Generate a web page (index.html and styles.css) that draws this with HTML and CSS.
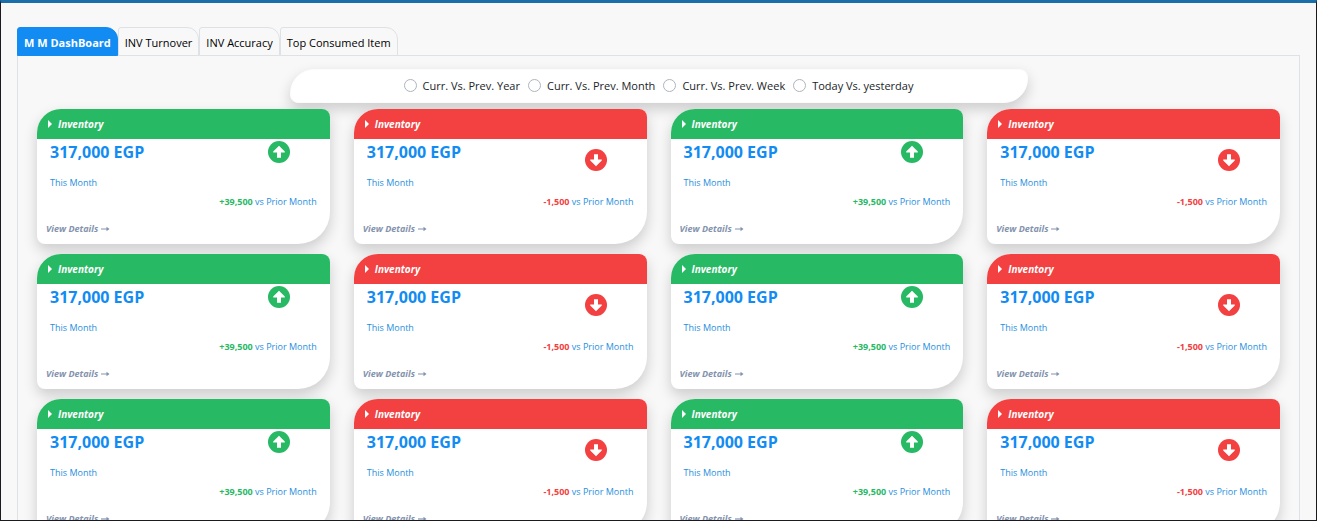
FILE: index.html
```html
<!DOCTYPE html>
<html lang="en">
<head>
<meta charset="utf-8">
<title>M M DashBoard</title>
<link rel="stylesheet" href="styles.css">
</head>
<body>
<svg class="defs" aria-hidden="true">
  <symbol id="up" viewBox="0 0 22 22"><circle cx="11" cy="11" r="11" fill="currentColor"/><path d="M11 4.8 16.8 10.4V11.6H13V16.8H9V11.6H5.2V10.4Z" fill="#fff"/></symbol>
  <symbol id="down" viewBox="0 0 22 22"><circle cx="11" cy="11" r="11" fill="currentColor"/><path d="M11 17.2 16.8 11.6V10.4H13V5.2H9V10.4H5.2V11.6Z" fill="#fff"/></symbol>
  <symbol id="caret" viewBox="0 0 4 8"><path d="M0 0 4 4 0 8Z" fill="#fff"/></symbol>
  <symbol id="arrow" viewBox="0 0 9 6"><path d="M0 3H7" stroke="currentColor" stroke-width="1.2"/><path d="M5.5 .8 8.5 3 5.5 5.2Z" fill="currentColor"/></symbol>
</svg>
<main class="page">
  <div class="tabs" role="tablist">
    <button class="tab active" role="tab" aria-selected="true">M M DashBoard</button>
    <button class="tab" role="tab">INV Turnover</button>
    <button class="tab" role="tab">INV Accuracy</button>
    <button class="tab" role="tab">Top Consumed Item</button>
  </div>
  <section class="panel">
    <form class="filters">
      <label class="option"><input type="radio" name="period">Curr. Vs. Prev. Year</label>
      <label class="option"><input type="radio" name="period">Curr. Vs. Prev. Month</label>
      <label class="option"><input type="radio" name="period">Curr. Vs. Prev. Week</label>
      <label class="option"><input type="radio" name="period">Today Vs. yesterday</label>
    </form>
    <div class="cards" id="cards"></div>
  </section>
</main>
<script src="cards.js"></script>
</body>
</html>
```
FILE: styles.css
```css
* { box-sizing: border-box; }
body {
  margin: 0;
  height: 100vh;
  overflow: hidden;
  border: 1px solid #1c1a20;
  border-top: 3px solid #1a6fab;
  background: #f8f8f8;
  font-family: "Open Sans", sans-serif;
  font-size: 11px;
  color: #212529;
}
.defs { position: absolute; width: 0; height: 0; }
.page { padding: 24px 16px; }
.tabs { display: flex; }
.tab {
  height: 29px;
  margin-bottom: -1px;
  padding: 2px 6px 0;
  border: 1px solid #dee2e6;
  border-radius: 3px 12px 0 0;
  background: #f8f8f8;
  font: 11px "Open Sans", sans-serif;
  color: #000;
}
.tab.active {
  border-color: #128cf3;
  background: #128cf3;
  color: #fff;
  font-weight: 700;
}
.panel {
  padding: 13px 19px;
  border: 1px solid #dee2e6;
}
.filters {
  display: flex;
  justify-content: center;
  align-items: center;
  gap: 8px;
  max-width: 738px;
  height: 34px;
  margin: 0 auto 6px;
  border: 1px solid #fcfcfc;
  border-radius: 24px 8px 24px 8px;
  background: #fff;
  box-shadow: 0 6px 14px rgba(0, 0, 0, .18);
}
.option { display: flex; align-items: center; gap: 6px; line-height: 14px; }
.option input {
  appearance: none;
  width: 13px;
  height: 13px;
  margin: 0 0 2px;
  border: 1px solid #adb5bd;
  border-radius: 50%;
  background: #fff;
}
.option input:checked { background: #128cf3; }
.cards {
  display: grid;
  grid-template-columns: repeat(4, 1fr);
  gap: 10px 24px;
}
.card {
  display: flex;
  flex-direction: column;
  height: 135px;
  border-radius: 24px 8px 32px 8px;
  overflow: hidden;
  background: #fff;
  color: #1f8fe0;
  box-shadow: 0 6px 14px rgba(0, 0, 0, .18);
}
.card-head {
  display: flex;
  align-items: center;
  gap: 6px;
  height: 30px;
  padding-left: 11px;
  color: #fff;
  font-size: 10px;
  font-style: italic;
  font-weight: 700;
}
.caret { width: 4px; height: 8px; }
.gain .card-head { background: #28b965; }
.loss .card-head { background: #f34041; }
.gain .trend, .gain .delta { color: #28b965; }
.loss .trend, .loss .delta { color: #f34041; }
.summary {
  display: flex;
  justify-content: space-between;
  height: 36px;
  padding: 2px 40px 0 13px;
}
.value {
  margin: 0;
  font-size: 16px;
  line-height: 22px;
  font-weight: 700;
  color: #128cf3;
}
.trend { width: 22px; height: 22px; }
.loss .trend { margin-top: 8px; }
.period, .compare { margin: 0; padding: 0 13px; font-size: 9px; line-height: 16px; }
.compare { margin-top: 3px; text-align: right; }
.delta { font-weight: 700; }
.details {
  display: flex;
  align-items: center;
  gap: 3px;
  margin-top: 11px;
  padding-left: 9px;
  font-size: 9px;
  line-height: 16px;
  font-style: italic;
  font-weight: 700;
  color: #8493ad;
  text-decoration: none;
}
.arrow { width: 9px; height: 6px; }
```
FILE: cards.js
```js
const kinds = {
  gain: { icon: "up", delta: "+39,500" },
  loss: { icon: "down", delta: "-1,500" }
};
const order = Array.from({ length: 12 }, (_, i) => (i % 2 ? "loss" : "gain"));
document.getElementById("cards").innerHTML = order.map(kind => `
  <article class="card ${kind}">
    <header class="card-head"><svg class="caret"><use href="#caret"/></svg>Inventory</header>
    <div class="summary">
      <h2 class="value">317,000 EGP</h2>
      <svg class="trend"><use href="#${kinds[kind].icon}"/></svg>
    </div>
    <p class="period">This Month</p>
    <p class="compare"><span class="delta">${kinds[kind].delta}</span> vs Prior Month</p>
    <a class="details" href="#">View Details<svg class="arrow"><use href="#arrow"/></svg></a>
  </article>`).join("");
```
